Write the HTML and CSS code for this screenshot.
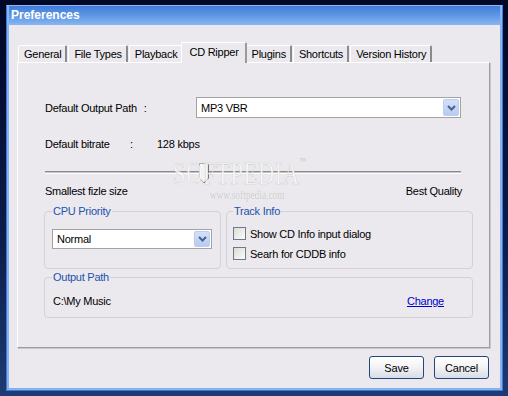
FILE: index.html
```html
<!DOCTYPE html>
<html lang="en">
<head>
    <meta charset="UTF-8">
    <meta name="viewport" content="width=device-width, initial-scale=1.0">
    <title>Preferences</title>
    <link rel="stylesheet" href="styles.css">
</head>
<body>
    <div class="window">
        <div class="titlebar">Preferences</div>
        <div class="frame">
            <div class="tabs">
                <span class="tab">General</span>
                <span class="tab">File Types</span>
                <span class="tab">Playback</span>
                <span class="tab active">CD Ripper</span>
                <span class="tab">Plugins</span>
                <span class="tab">Shortcuts</span>
                <span class="tab">Version History</span>
            </div>

            <div class="panel">
                <div class="row-path">
                    <span class="label-path">Default Output Path <span class="colon">:</span></span>
                    <div class="combo combo-wide">
                        <span class="combo-text">MP3 VBR</span>
                        <span class="combo-btn">
                            <svg width="9" height="6" viewBox="0 0 9 6"><path d="M1 1 L4.5 4.5 L8 1" fill="none" stroke="#4d6185" stroke-width="2"/></svg>
                        </span>
                    </div>
                </div>

                <div class="row-bitrate">
                    <span class="bit-label">Default bitrate</span>
                    <span class="bit-colon">:</span>
                    <span>128 kbps</span>
                </div>

                <div class="slider">
                    <div class="track"></div>
                    <svg class="thumb" width="11" height="21" viewBox="0 0 11 21">
                        <defs>
                            <linearGradient id="tg" x1="0" y1="0" x2="1" y2="0">
                                <stop offset="0" stop-color="#ffffff"/>
                                <stop offset="1" stop-color="#e2e2e2"/>
                            </linearGradient>
                        </defs>
                        <path d="M0.5 0.5 H9.5 V15 L5 20 L0.5 15 Z" fill="url(#tg)" stroke="#a8a8a8"/>
                        <path d="M9.5 0.5 V15 L5 20" fill="none" stroke="#6e6e6e"/>
                    </svg>
                </div>

                <div class="row-scale">
                    <span>Smallest fizle size</span>
                    <span>Best Quality</span>
                </div>

                <div class="groups">
                    <fieldset class="group group-cpu">
                        <legend>CPU Priority</legend>
                        <div class="combo combo-cpu">
                            <span class="combo-text">Normal</span>
                            <span class="combo-btn">
                                <svg width="9" height="6" viewBox="0 0 9 6"><path d="M1 1 L4.5 4.5 L8 1" fill="none" stroke="#4d6185" stroke-width="2"/></svg>
                            </span>
                        </div>
                    </fieldset>
                    <fieldset class="group group-track">
                        <legend>Track Info</legend>
                        <label class="check"><span class="box"></span>Show CD Info input dialog</label>
                        <label class="check"><span class="box"></span>Searh for CDDB info</label>
                    </fieldset>
                </div>

                <fieldset class="group group-output">
                    <legend>Output Path</legend>
                    <div class="output-row">
                        <span>C:\My Music</span>
                        <a class="link" href="#">Change</a>
                    </div>
                </fieldset>

                <div class="watermark">
                    <span class="wm-big">SOFTPEDIA<span class="wm-tm">™</span></span>
                    <span class="wm-url">www.softpedia.com</span>
                </div>
            </div>

            <div class="buttons">
                <button class="btn">Save</button>
                <button class="btn">Cancel</button>
            </div>
        </div>
    </div>
</body>
</html>
```

FILE: styles.css
```css
body {
    margin: 0;
    padding: 5px 0 0 6px;
    height: 396px;
    box-sizing: border-box;
    overflow: hidden;
    background: linear-gradient(#010726, #0b1c4a 60%, #1d3b72);
    font-family: "Liberation Sans", Arial, sans-serif;
    font-size: 11px;
    letter-spacing: -0.25px;
    color: #000;
}

.window {
    width: 497px;
    height: 386px;
    box-sizing: border-box;
    border: 1px solid #3f78d8;
    border-top-color: #8fb6f2;
    background: #ebe9ed;
    display: flex;
    flex-direction: column;
}

.titlebar {
    height: 19px;
    line-height: 18px;
    padding-left: 2px;
    color: #fff;
    font-weight: bold;
    font-size: 12px;
    letter-spacing: 0;
    background: linear-gradient(#3f7ddb, #5b94e2 45%, #86b6f2);
    border-left: 2px solid #8ab4f0;
    border-right: 2px solid #8ab4f0;
}

.frame {
    flex: 1;
    display: flex;
    flex-direction: column;
    border: 2px solid #86b2f0;
    border-top: none;
    padding: 16px 10px 0 8px;
}

.tabs {
    display: flex;
    align-items: flex-end;
    height: 21px;
    padding-left: 1px;
    position: relative;
    z-index: 1;
}

.tab {
    height: 17px;
    line-height: 17px;
    padding: 0 4px 0 5px;
    box-sizing: border-box;
    border: 1px solid #fff;
    border-right: 2px solid #8a8a8a;
    border-bottom: none;
    border-radius: 2px 2px 0 0;
    margin-right: 1px;
    background: #ebe9ed;
}

.tab.active {
    height: 21px;
    line-height: 19px;
    padding: 0 6px 0 7px;
    margin: 0 -1px -1px -3px;
    border-right-color: #9a9a9a;
    position: relative;
}

.panel {
    position: relative;
    height: 286px;
    box-sizing: border-box;
    border-top: 1px solid #fff;
    border-left: 1px solid #fff;
    border-right: 1px solid #9d9d9d;
    border-bottom: 1px solid #9d9d9d;
    box-shadow: 1px 1px 0 #c8c8c8;
    padding: 0 16px 0 26px;
}

.row-path {
    display: flex;
    align-items: center;
    margin-top: 34px;
    margin-left: 1px;
    height: 21px;
}

.label-path {
    width: 151px;
    white-space: nowrap;
}

.colon {
    margin-left: 4px;
}

.combo {
    display: flex;
    align-items: center;
    box-sizing: border-box;
    background: #fff;
    border: 1px solid #a3a3a3;
    padding: 1px;
}

.combo-wide {
    width: 265px;
    height: 21px;
}

.combo-cpu {
    width: 160px;
    height: 20px;
    margin-top: 11px;
}

.combo-text {
    flex: 1;
    padding-left: 3px;
}

.combo-btn {
    width: 16px;
    height: 100%;
    box-sizing: border-box;
    display: flex;
    align-items: center;
    justify-content: center;
    border: 1px solid #bccdf0;
    border-radius: 2px;
    background: linear-gradient(#d2e0fb, #b7cbf1);
}

.row-bitrate {
    display: flex;
    margin-top: 19px;
    margin-left: 1px;
    line-height: 14px;
}

.bit-label {
    width: 85px;
}

.bit-colon {
    width: 27px;
}

.slider {
    position: relative;
    width: 416px;
    height: 22px;
    margin-top: 11px;
    margin-left: 1px;
}

.track {
    position: absolute;
    left: 0;
    right: 0;
    top: 9px;
    height: 1px;
    border-top: 1px solid #8c8c8c;
    border-bottom: 1px solid #fff;
    background: #c4c4c4;
}

.thumb {
    position: absolute;
    left: 154px;
    top: 1px;
}

.row-scale {
    display: flex;
    justify-content: space-between;
    width: 417px;
    margin-left: 1px;
    line-height: 14px;
}

.groups {
    display: flex;
    gap: 5px;
    margin-top: 7px;
}

.group {
    margin: 0;
    padding: 0 7px;
    border: 1px solid #d3d1d6;
    border-radius: 4px;
    min-width: 0;
    box-sizing: border-box;
}

.group legend {
    padding: 0 1px;
    line-height: 13px;
    color: #2152ad;
}

.group-cpu {
    width: 177px;
    height: 64px;
}

.group-track {
    width: 247px;
    height: 64px;
    padding-left: 6px;
}

.check {
    display: flex;
    align-items: center;
    height: 13px;
    margin-top: 9px;
    margin-bottom: -2px;
    white-space: nowrap;
}

.check + .check {
    margin-top: 9px;
}

.box {
    width: 13px;
    height: 13px;
    box-sizing: border-box;
    border: 1px solid #6c7a8a;
    background: linear-gradient(135deg, #dcdcd6, #fbfbfa);
    margin-right: 4px;
}

.group-output {
    width: 429px;
    height: 47px;
    margin-top: 2px;
    padding-right: 28px;
}

.output-row {
    display: flex;
    justify-content: space-between;
    line-height: 14px;
    margin-top: 10px;
    margin-left: 1px;
}

.link {
    color: #0000cc;
    text-decoration: underline;
}

.watermark {
    position: absolute;
    left: 155px;
    top: 93px;
    pointer-events: none;
    font-family: "Liberation Serif", serif;
    letter-spacing: 0;
    transform: scaleX(0.72);
    transform-origin: left top;
}

.wm-big {
    display: block;
    font-size: 31px;
    letter-spacing: 1px;
    color: rgba(255, 255, 255, 0.75);
    -webkit-text-stroke: 0.6px rgba(170, 170, 170, 0.5);
}

.wm-tm {
    font-size: 9px;
    vertical-align: top;
    -webkit-text-stroke: 0;
    color: rgba(175, 175, 175, 0.7);
}

.wm-url {
    display: block;
    margin: -5px 0 0 51px;
    font-size: 13px;
    color: rgba(185, 185, 185, 0.75);
    text-shadow: 0 0 1px #fff;
}

.buttons {
    display: flex;
    justify-content: flex-end;
    gap: 10px;
    margin-top: 8px;
    padding-right: 1px;
}

.btn {
    width: 55px;
    height: 23px;
    padding: 0;
    font-family: "Liberation Sans", Arial, sans-serif;
    font-size: 11px;
    letter-spacing: -0.2px;
    color: #000;
    border: 1px solid #26457a;
    border-radius: 3px;
    background: linear-gradient(#ffffff, #f4f4f6 45%, #d8dde8);
}
```
